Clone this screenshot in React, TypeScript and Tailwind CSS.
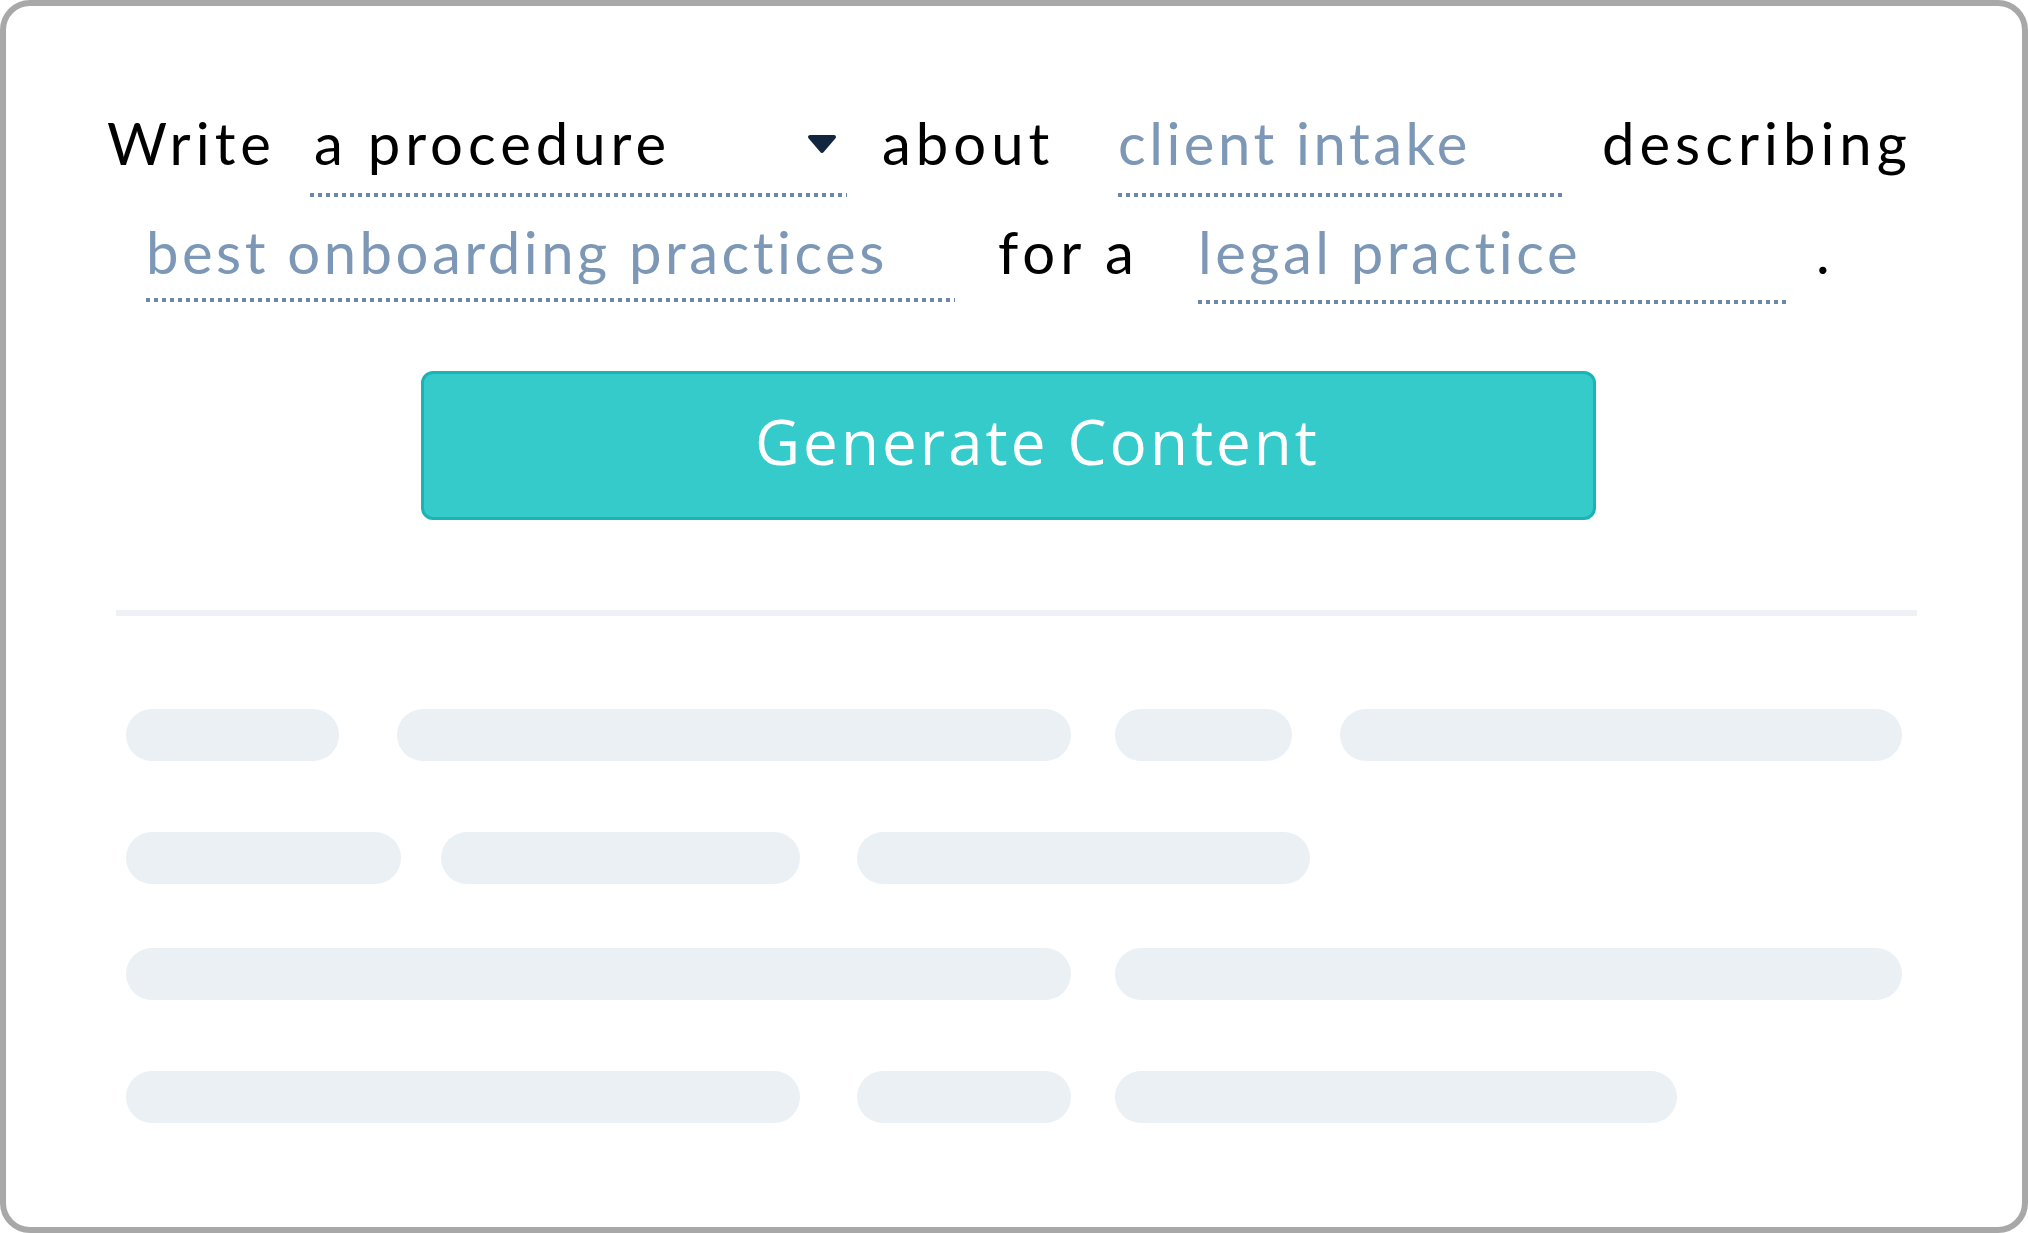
// Import React
import type { ReactNode } from 'react';

// == Data =>
// Skeleton lines : [marginLeft, width] en px
const skeletonRows: Array<Array<[number, number]>> = [
  [
    [0, 213],
    [58, 674],
    [44, 177],
    [48, 562],
  ],
  [
    [0, 275],
    [40, 359],
    [57, 453],
  ],
  [
    [0, 945],
    [44, 787],
  ],
  [
    [0, 674],
    [57, 214],
    [44, 562],
  ],
];

const rowMargins = ['mt-[93px]', 'mt-[71px]', 'mt-[64px]', 'mt-[71px]'];

// == Sub components =>
const Underline = ({ className }: { className: string }) => (
  <div
    className={`h-[4px] w-full bg-[image:repeating-linear-gradient(90deg,#6b88a8_0_4px,transparent_4px_8px)] ${className}`}
  />
);

const Word = ({ children, className }: { children: ReactNode; className: string }) => (
  <div
    className={`shrink-0 h-[70px] leading-[70px] text-black tracking-[5px] whitespace-nowrap ${className}`}
  >
    {children}
  </div>
);

const Field = ({
  label,
  className,
  lineClassName,
}: {
  label: string;
  className: string;
  lineClassName: string;
}) => (
  <div className={`shrink-0 flex flex-col ${className}`}>
    <span className="h-[70px] leading-[70px] text-[#7c98b6] tracking-[3.5px] whitespace-nowrap">
      {label}
    </span>
    <Underline className={lineClassName} />
  </div>
);

const Caret = () => (
  <svg width="30" height="20" viewBox="0 0 30 20" className="shrink-0">
    <polygon
      points="3,3 27,3 15,17"
      fill="#12263f"
      stroke="#12263f"
      strokeWidth="4"
      strokeLinejoin="round"
    />
  </svg>
);

// == Component =>
const App = () => {
  return (
    <div className="w-[2028px] h-[1233px] bg-white border-[6px] border-[#a8a8a8] rounded-[30px] overflow-hidden font-['Lato',sans-serif] text-[58px]">
      {/* Prompt line 1 */}
      <div className="flex items-start pt-[102px] pl-[101px]">
        <Word className="w-[203px]">Write</Word>
        <div className="shrink-0 w-[537px] flex flex-col">
          <div className="h-[70px] flex items-start justify-between pl-[4px] pr-[10px]">
            <span className="leading-[70px] text-black tracking-[5px] whitespace-nowrap">
              a procedure
            </span>
            <div className="mt-[26px]">
              <Caret />
            </div>
          </div>
          <Underline className="mt-[15px]" />
        </div>
        <Word className="w-[253px] pl-[35px]">about</Word>
        <Field
          label="client intake"
          className="w-[466px] pl-[18px]"
          lineClassName="mt-[15px]"
        />
        <Word className="pl-[36px]">describing</Word>
      </div>

      {/* Prompt line 2 */}
      <div className="flex items-start mt-[20px] pl-[118px]">
        <Field
          label="best onboarding practices"
          className="w-[831px] pl-[22px]"
          lineClassName="mt-[11px]"
        />
        <Word className="w-[218px] pl-[43px]">for a</Word>
        <Field
          label="legal practice"
          className="w-[617px] pl-[25px]"
          lineClassName="mt-[13px]"
        />
        <Word className="pl-[26px]">.</Word>
      </div>

      {/* Button */}
      <div className="mt-[67px] ml-[415px] w-[1175px] h-[149px] rounded-[12px] border-[3px] border-[#1db3b5] bg-[#35cbcb] flex items-center justify-center pl-[58px] pb-[10px]">
        <span className="font-['Open_Sans',sans-serif] text-[62px] tracking-[3px] text-white leading-none">
          Generate Content
        </span>
      </div>

      {/* Divider */}
      <div className="mt-[90px] ml-[110px] w-[1801px] h-[6px] bg-[#eef2f7]" />

      {/* Skeleton */}
      <div className="pl-[120px]">
        {skeletonRows.map((row, i) => (
          <div key={i} className={`flex ${rowMargins[i]}`}>
            {row.map(([ml, w], j) => (
              <div
                key={j}
                className="h-[52px] rounded-full bg-[#eaf0f4] shrink-0"
                style={{ marginLeft: ml, width: w }}
              />
            ))}
          </div>
        ))}
      </div>
    </div>
  );
};

export default App;
